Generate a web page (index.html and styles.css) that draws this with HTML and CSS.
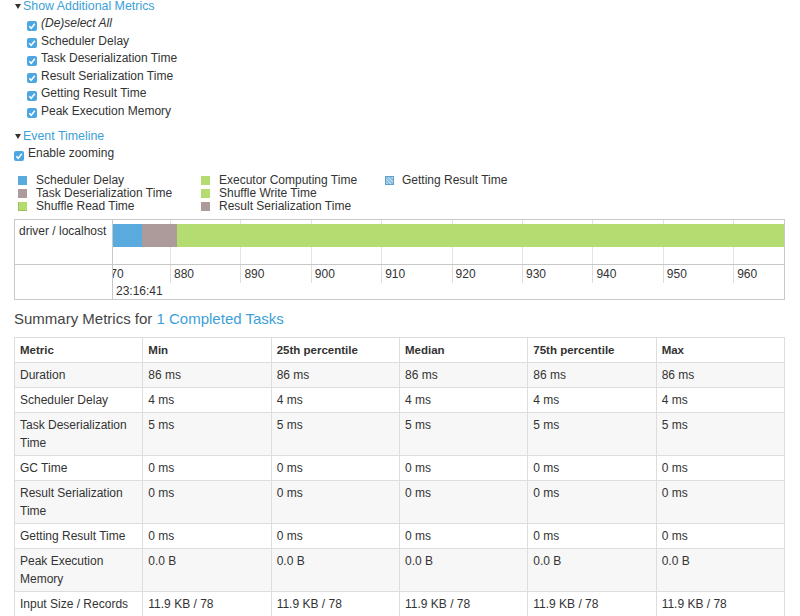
FILE: index.html
```html
<!DOCTYPE html>
<html>
<head>
<meta charset="utf-8">
<link rel="stylesheet" href="styles.css">
</head>
<body>
<div class="page">
  <div class="toggle"><span class="arrow"></span><a class="link">Show Additional Metrics</a></div>
  <ul class="metric-list">
    <li><span class="cb"><svg width="10" height="10" viewBox="0 0 10 10"><rect width="10" height="10" rx="2" fill="#4ba6e1"/><path d="M2.3 5.3 L4.2 7.3 L7.8 2.8" stroke="#fff" stroke-width="1.5" fill="none"/></svg></span><em>(De)select All</em></li>
    <li><span class="cb"><svg width="10" height="10" viewBox="0 0 10 10"><rect width="10" height="10" rx="2" fill="#4ba6e1"/><path d="M2.3 5.3 L4.2 7.3 L7.8 2.8" stroke="#fff" stroke-width="1.5" fill="none"/></svg></span>Scheduler Delay</li>
    <li><span class="cb"><svg width="10" height="10" viewBox="0 0 10 10"><rect width="10" height="10" rx="2" fill="#4ba6e1"/><path d="M2.3 5.3 L4.2 7.3 L7.8 2.8" stroke="#fff" stroke-width="1.5" fill="none"/></svg></span>Task Deserialization Time</li>
    <li><span class="cb"><svg width="10" height="10" viewBox="0 0 10 10"><rect width="10" height="10" rx="2" fill="#4ba6e1"/><path d="M2.3 5.3 L4.2 7.3 L7.8 2.8" stroke="#fff" stroke-width="1.5" fill="none"/></svg></span>Result Serialization Time</li>
    <li><span class="cb"><svg width="10" height="10" viewBox="0 0 10 10"><rect width="10" height="10" rx="2" fill="#4ba6e1"/><path d="M2.3 5.3 L4.2 7.3 L7.8 2.8" stroke="#fff" stroke-width="1.5" fill="none"/></svg></span>Getting Result Time</li>
    <li><span class="cb"><svg width="10" height="10" viewBox="0 0 10 10"><rect width="10" height="10" rx="2" fill="#4ba6e1"/><path d="M2.3 5.3 L4.2 7.3 L7.8 2.8" stroke="#fff" stroke-width="1.5" fill="none"/></svg></span>Peak Execution Memory</li>
  </ul>
  <div class="toggle toggle-timeline"><span class="arrow"></span><a class="link">Event Timeline</a></div>
  <div class="zoom-opt"><span class="cb"><svg width="10" height="10" viewBox="0 0 10 10"><rect width="10" height="10" rx="2" fill="#4ba6e1"/><path d="M2.3 5.3 L4.2 7.3 L7.8 2.8" stroke="#fff" stroke-width="1.5" fill="none"/></svg></span>Enable zooming</div>

  <div class="legend">
    <div class="lg-item"><span class="sw sw-sched"></span>Scheduler Delay</div>
    <div class="lg-item"><span class="sw sw-deser"></span>Task Deserialization Time</div>
    <div class="lg-item"><span class="sw sw-green sw-edge"></span>Shuffle Read Time</div>
    <div class="lg-item"><span class="sw sw-green"></span>Executor Computing Time</div>
    <div class="lg-item"><span class="sw sw-green"></span>Shuffle Write Time</div>
    <div class="lg-item"><span class="sw sw-deser"></span>Result Serialization Time</div>
    <div class="lg-item lg-last"><span class="sw sw-getting"></span>Getting Result Time</div>
  </div>

  <div class="timeline">
    <div class="tl-label">driver / localhost</div>
    <div class="tl-items">
      <span class="gline" style="left:57px"></span>
      <span class="gline" style="left:127.4px"></span>
      <span class="gline" style="left:197.8px"></span>
      <span class="gline" style="left:268.2px"></span>
      <span class="gline" style="left:338.6px"></span>
      <span class="gline" style="left:409px"></span>
      <span class="gline" style="left:479.4px"></span>
      <span class="gline" style="left:549.8px"></span>
      <span class="gline" style="left:620.2px"></span>
      <div class="bar">
        <span class="seg seg-sched" style="width:29px"></span>
        <span class="seg seg-deser" style="width:35px"></span>
        <span class="seg seg-exec"></span>
      </div>
    </div>
    <div class="tl-axis-label"></div>
    <div class="tl-axis">
      <span class="tick" style="left:-13.4px">870</span>
      <span class="tick" style="left:57px">880</span>
      <span class="tick" style="left:127.4px">890</span>
      <span class="tick" style="left:197.8px">900</span>
      <span class="tick" style="left:268.2px">910</span>
      <span class="tick" style="left:338.6px">920</span>
      <span class="tick" style="left:409px">930</span>
      <span class="tick" style="left:479.4px">940</span>
      <span class="tick" style="left:549.8px">950</span>
      <span class="tick" style="left:620.2px">960</span>
      <span class="major">23:16:41</span>
    </div>
  </div>

  <h4 class="summary-title">Summary Metrics for <a class="link">1 Completed Tasks</a></h4>
  <table class="metrics">
    <thead>
      <tr><th>Metric</th><th>Min</th><th>25th percentile</th><th>Median</th><th>75th percentile</th><th>Max</th></tr>
    </thead>
    <tbody>
      <tr><td>Duration</td><td>86 ms</td><td>86 ms</td><td>86 ms</td><td>86 ms</td><td>86 ms</td></tr>
      <tr><td>Scheduler Delay</td><td>4 ms</td><td>4 ms</td><td>4 ms</td><td>4 ms</td><td>4 ms</td></tr>
      <tr><td>Task Deserialization Time</td><td>5 ms</td><td>5 ms</td><td>5 ms</td><td>5 ms</td><td>5 ms</td></tr>
      <tr><td>GC Time</td><td>0 ms</td><td>0 ms</td><td>0 ms</td><td>0 ms</td><td>0 ms</td></tr>
      <tr><td>Result Serialization Time</td><td>0 ms</td><td>0 ms</td><td>0 ms</td><td>0 ms</td><td>0 ms</td></tr>
      <tr><td>Getting Result Time</td><td>0 ms</td><td>0 ms</td><td>0 ms</td><td>0 ms</td><td>0 ms</td></tr>
      <tr><td>Peak Execution Memory</td><td>0.0 B</td><td>0.0 B</td><td>0.0 B</td><td>0.0 B</td><td>0.0 B</td></tr>
      <tr><td>Input Size / Records</td><td>11.9 KB / 78</td><td>11.9 KB / 78</td><td>11.9 KB / 78</td><td>11.9 KB / 78</td><td>11.9 KB / 78</td></tr>
    </tbody>
  </table>
</div>
</body>
</html>
```

FILE: styles.css
```css
html, body {
  margin: 0;
  padding: 0;
  background: #fff;
}
body {
  font-family: "Liberation Sans", Arial, sans-serif;
  font-size: 12px;
  color: #333;
  overflow: hidden;
}
.page {
  padding: 0 15px 0 14px;
}
.link {
  color: #3d9fd8;
  text-decoration: none;
}
.toggle {
  display: flex;
  align-items: center;
  height: 12px;
  line-height: 12px;
  font-size: 12.4px;
}
.arrow {
  width: 0;
  height: 0;
  border-left: 3.5px solid transparent;
  border-right: 3.5px solid transparent;
  border-top: 5px solid #333;
  margin: 0 2px 0 1px;
}
.metric-list {
  list-style: none;
  margin: 3px 0 0;
  padding: 0 0 0 13px;
}
.metric-list li {
  display: flex;
  align-items: center;
  height: 17.5px;
  line-height: 17.5px;
}
.cb {
  display: flex;
  width: 10px;
  height: 10px;
  margin: 4px 4px 0 0;
}
.toggle-timeline {
  margin-top: 10px;
}
.zoom-opt {
  display: flex;
  align-items: center;
  height: 17.5px;
  line-height: 17.5px;
  margin-top: 3px;
}
.legend {
  display: grid;
  grid-template-columns: 183px 184px auto;
  grid-template-rows: repeat(3, 13px);
  grid-auto-flow: column;
  padding-left: 4px;
  margin-top: 11px;
  line-height: 13px;
}
.lg-item {
  display: flex;
  align-items: center;
}
.sw {
  width: 9px;
  height: 9px;
  margin-right: 9px;
  box-sizing: border-box;
}
.lg-last .sw {
  margin-right: 8px;
}
.sw-sched {
  background-color: #3f9ed8;
  background-image: radial-gradient(circle, rgba(255,255,255,0.45) 0.5px, transparent 0.8px);
  background-size: 2px 2px;
}
.sw-deser {
  background: #ad9b9b;
}
.sw-green {
  background: #b5dc71;
}
.sw-edge {
  border-left: 1px solid #9cc05e;
  border-bottom: 1px solid #9cc05e;
}
.sw-getting {
  background-color: #8fc3e3;
  border: 1px solid #5e9fcc;
  background-image: repeating-linear-gradient(45deg, rgba(255,255,255,0.5) 0 1px, transparent 1px 3px);
}
.timeline {
  display: grid;
  grid-template-columns: 98px 1fr;
  grid-template-rows: 45px 34px;
  border: 1px solid #c8c8c8;
  margin-top: 6px;
}
.tl-label {
  border-right: 1px solid #c8c8c8;
  border-bottom: 1px solid #c8c8c8;
  padding: 5px 0 0 4px;
  line-height: 13px;
}
.tl-items {
  position: relative;
  overflow: hidden;
  border-bottom: 1px solid #c8c8c8;
}
.gline {
  position: absolute;
  top: 0;
  bottom: 0;
  width: 1px;
  background: #e3e3e3;
}
.bar {
  position: relative;
  display: flex;
  height: 23px;
  margin-top: 4px;
}
.seg {
  height: 100%;
}
.seg-sched {
  background-color: #3f9ed8;
  background-image: radial-gradient(circle, rgba(255,255,255,0.45) 0.5px, transparent 0.8px);
  background-size: 2px 2px;
}
.seg-deser {
  background: #ad9b9b;
}
.seg-exec {
  flex: 1;
  background: #b5dc71;
}
.tl-axis-label {
  border-right: 1px solid #c8c8c8;
}
.tl-axis {
  position: relative;
  overflow: hidden;
}
.tick {
  position: absolute;
  top: 0;
  height: 18px;
  padding: 2px 0 0 3px;
  box-sizing: border-box;
  line-height: 14px;
  border-left: 1px solid #dedede;
  white-space: nowrap;
}
.major {
  position: absolute;
  left: 3px;
  top: 19px;
  line-height: 14px;
}
.summary-title {
  font-size: 15px;
  font-weight: normal;
  color: #444;
  line-height: 20px;
  margin: 9px 0 8px;
}
.metrics {
  width: 100%;
  border-collapse: collapse;
  table-layout: fixed;
}
.metrics th,
.metrics td {
  border: 1px solid #dddddd;
  padding: 3px 5px;
  line-height: 18px;
  text-align: left;
  vertical-align: top;
}
.metrics th {
  font-weight: bold;
  font-size: 11.5px;
}
.metrics tbody tr:nth-child(odd) td {
  background: #f7f7f7;
}
```
